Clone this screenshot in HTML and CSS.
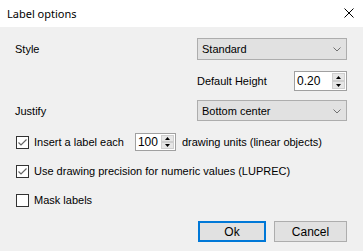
FILE: index.html
```html
<!DOCTYPE html>
<html lang="en">
<head>
  <meta charset="UTF-8" />
  <title>Label options</title>
  <link rel="stylesheet" href="styles.css">
</head>
<body>
  <div class="titlebar">
    <span class="title">Label options</span>
    <svg class="close" width="10" height="10" viewBox="0 0 10 10"><path d="M0.5 0.5L9.5 9.5M9.5 0.5L0.5 9.5" stroke="#000" stroke-width="1"/></svg>
  </div>

  <div class="content">
    <div class="row row-style">
      <span class="label">Style</span>
      <div class="combo">
        <span>Standard</span>
        <svg class="chev" width="8" height="5" viewBox="0 0 8 5"><path d="M0.5 0.5L4 4L7.5 0.5" fill="none" stroke="#707070"/></svg>
      </div>
    </div>

    <div class="row row-height">
      <span class="label">Default Height</span>
      <div class="spin spin-wide">
        <span class="spin-val">0.20</span>
        <div class="spin-btns">
          <div class="spin-btn"><svg width="5" height="3" viewBox="0 0 5 3"><path d="M2.5 0L5 3H0Z" fill="#000"/></svg></div>
          <div class="spin-btn"><svg width="5" height="3" viewBox="0 0 5 3"><path d="M0 0H5L2.5 3Z" fill="#000"/></svg></div>
        </div>
      </div>
    </div>

    <div class="row row-justify">
      <span class="label">Justify</span>
      <div class="combo">
        <span>Bottom center</span>
        <svg class="chev" width="8" height="5" viewBox="0 0 8 5"><path d="M0.5 0.5L4 4L7.5 0.5" fill="none" stroke="#707070"/></svg>
      </div>
    </div>

    <div class="row row-insert">
      <span class="check"><svg width="11" height="11" viewBox="0 0 11 11"><path d="M1.5 5.5L4 8L9.5 2.5" fill="none" stroke="#666" stroke-width="1.2"/></svg></span>
      <span class="cb-text">Insert a label each</span>
      <div class="spin spin-small">
        <span class="spin-val">100</span>
        <div class="spin-btns">
          <div class="spin-btn"><svg width="5" height="3" viewBox="0 0 5 3"><path d="M2.5 0L5 3H0Z" fill="#000"/></svg></div>
          <div class="spin-btn"><svg width="5" height="3" viewBox="0 0 5 3"><path d="M0 0H5L2.5 3Z" fill="#000"/></svg></div>
        </div>
      </div>
      <span class="after">drawing units (linear objects)</span>
    </div>

    <div class="row row-check">
      <span class="check"><svg width="11" height="11" viewBox="0 0 11 11"><path d="M1.5 5.5L4 8L9.5 2.5" fill="none" stroke="#666" stroke-width="1.2"/></svg></span>
      <span class="cb-text">Use drawing precision for numeric values (LUPREC)</span>
    </div>

    <div class="row row-check">
      <span class="check"></span>
      <span class="cb-text">Mask labels</span>
    </div>

    <div class="buttons">
      <button class="btn default">Ok</button>
      <button class="btn">Cancel</button>
    </div>
  </div>
</body>
</html>
```
FILE: styles.css
```css
body {
  margin: 0;
  background: #f0f0f0;
  font-family: "Liberation Sans", Arial, sans-serif;
  font-size: 11px;
  color: #000;
}
.titlebar {
  height: 27px;
  background: #fff;
  display: flex;
  align-items: center;
  justify-content: space-between;
  padding: 0 9px 0 7px;
}
.title {
  font-family: "Noto Sans", "Open Sans", sans-serif;
  font-size: 11px;
  margin-top: -1px;
}
.close {
  margin-top: -1px;
}
.content {
  padding: 0 16px 0 15px;
}
.row {
  display: flex;
  align-items: center;
}
.row-style {
  margin-top: 11px;
  height: 22px;
}
.row-height {
  margin-top: 11px;
  height: 20px;
}
.row-justify {
  margin-top: 9px;
  height: 21px;
}
.row-insert {
  margin-top: 12px;
  height: 18px;
}
.row-check {
  margin-top: 11px;
  height: 18px;
}
.label {
  flex: 1;
}
.row-height .label {
  flex: none;
  margin-left: 182px;
  margin-right: auto;
}
.combo {
  width: 150px;
  height: 100%;
  box-sizing: border-box;
  background: #e1e1e1;
  border: 1px solid #adadad;
  display: flex;
  align-items: center;
  justify-content: space-between;
  padding: 0 5px 0 4px;
}
.chev {
  margin-top: 1px;
}
.spin {
  box-sizing: border-box;
  height: 100%;
  background: #fff;
  border: 1px solid #a0a0a0;
  display: flex;
  align-items: center;
  padding: 0 1px 0 2px;
}
.spin-wide {
  width: 53px;
}
.spin-small {
  width: 41px;
  margin-left: 11px;
}
.spin-val {
  flex: 1;
  font-size: 12px;
}
.spin-btns {
  display: flex;
  flex-direction: column;
  height: calc(100% - 2px);
  width: 13px;
}
.spin-btn {
  flex: 1;
  background: #e6e6e6;
  border: 1px solid #cfcfcf;
  display: flex;
  align-items: center;
  justify-content: center;
}
.check {
  width: 13px;
  height: 13px;
  box-sizing: border-box;
  border: 1px solid #333;
  background: #fff;
  margin-left: 1px;
  display: flex;
  align-items: center;
  justify-content: center;
}
.cb-text {
  margin-left: 5px;
}
.after {
  margin-left: 6px;
}
.buttons {
  display: flex;
  justify-content: flex-end;
  gap: 8px;
  margin-top: 12px;
}
.btn {
  font-family: "Liberation Sans", Arial, sans-serif;
  font-size: 12px;
  height: 21px;
  width: 73px;
  background: #e1e1e1;
  border: 1px solid #adadad;
  padding: 0;
}
.btn.default {
  width: 68px;
  border: 2px solid #0078d7;
}
```
